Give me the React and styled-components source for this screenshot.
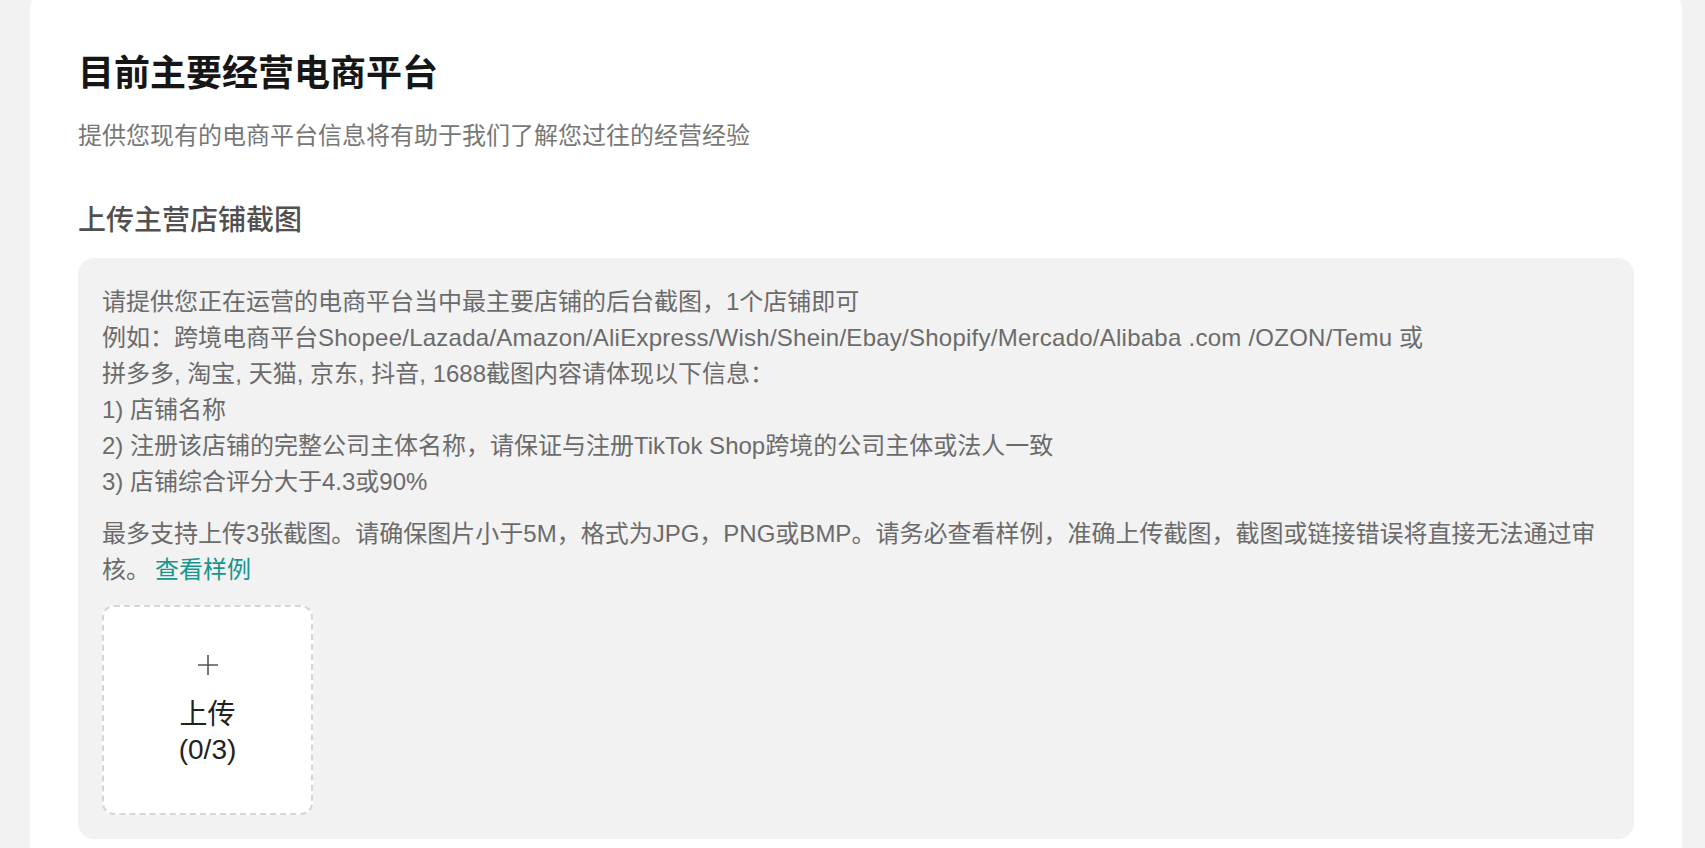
import React from 'react';
import styled, { createGlobalStyle } from 'styled-components';

const GlobalStyle = createGlobalStyle`
  * {
    box-sizing: border-box;
  }

  html, body {
    margin: 0;
    padding: 0;
    background: #f2f2f2;
    font-family: "Liberation Sans", "Noto Sans CJK SC", sans-serif;
    -webkit-font-smoothing: antialiased;
  }
`;

const Page = styled.div`
  height: 848px;
  padding: 0 23px 0 30px;
  overflow: hidden;
`;

const Card = styled.section`
  margin-top: -8px;
  min-height: 900px;
  padding: 58px 48px 0;
  background: #ffffff;
  border-radius: 16px;
`;

const Title = styled.h1`
  margin: 0;
  font-size: 36px;
  line-height: 48px;
  font-weight: 600;
  color: #161616;
`;

const Subtitle = styled.p`
  margin: 20px 0 0;
  font-size: 24px;
  line-height: 36px;
  color: #777777;
`;

const SectionTitle = styled.h2`
  margin: 47px 0 0;
  font-size: 28px;
  line-height: 40px;
  font-weight: 500;
  color: #505050;
`;

const InfoBox = styled.div`
  margin-top: 17px;
  padding: 26px 24px 24px;
  background: #f2f2f2;
  border-radius: 16px;
`;

const Paragraph = styled.p`
  margin: 0;
  font-size: 24px;
  line-height: 36px;
  color: #6b6b6b;

  & + & {
    margin-top: 16px;
  }
`;

const Latin = styled.span`
  letter-spacing: 0.25px;
`;

const Link = styled.a`
  margin-left: 5px;
  color: #17968f;
  text-decoration: none;
  cursor: pointer;
`;

const UploadBox = styled.button`
  margin-top: 17px;
  width: 211px;
  height: 210px;
  display: flex;
  flex-direction: column;
  align-items: center;
  justify-content: center;
  background: #ffffff;
  border: 2px dashed #d6d6d6;
  border-radius: 12px;
  font-family: inherit;
  cursor: pointer;
  padding: 0;
`;

const PlusIcon = styled.svg`
  width: 24px;
  height: 24px;
  margin-bottom: 20px;
`;

const UploadLabel = styled.span`
  font-size: 28px;
  line-height: 35px;
  color: #222222;
  text-align: center;
`;

const App = () => {
  return (
    <>
      <GlobalStyle />
      <Page>
        <Card>
          <Title>目前主要经营电商平台</Title>
          <Subtitle>提供您现有的电商平台信息将有助于我们了解您过往的经营经验</Subtitle>
          <SectionTitle>上传主营店铺截图</SectionTitle>
          <InfoBox>
            <Paragraph>
              请提供您正在运营的电商平台当中最主要店铺的后台截图，1个店铺即可
              <br />
              例如：跨境电商平台
              <Latin>Shopee/Lazada/Amazon/AliExpress/Wish/Shein/Ebay/Shopify/Mercado/Alibaba .com /OZON/Temu</Latin> 或
              <br />
              拼多多, 淘宝, 天猫, 京东, 抖音, 1688截图内容请体现以下信息：
              <br />
              1) 店铺名称
              <br />
              2) 注册该店铺的完整公司主体名称，请保证与注册TikTok Shop跨境的公司主体或法人一致
              <br />
              3) 店铺综合评分大于4.3或90%
            </Paragraph>
            <Paragraph>
              最多支持上传3张截图。请确保图片小于5M，格式为JPG，PNG或BMP。请务必查看样例，准确上传截图，截图或链接错误将直接无法通过审核。
              <Link>查看样例</Link>
            </Paragraph>
            <UploadBox type="button">
              <PlusIcon viewBox="0 0 24 24" fill="none" stroke="#555555" strokeWidth="1.6">
                <path d="M12 2v20M2 12h20" />
              </PlusIcon>
              <UploadLabel>
                上传
                <br />
                (0/3)
              </UploadLabel>
            </UploadBox>
          </InfoBox>
        </Card>
      </Page>
    </>
  );
};

export default App;
